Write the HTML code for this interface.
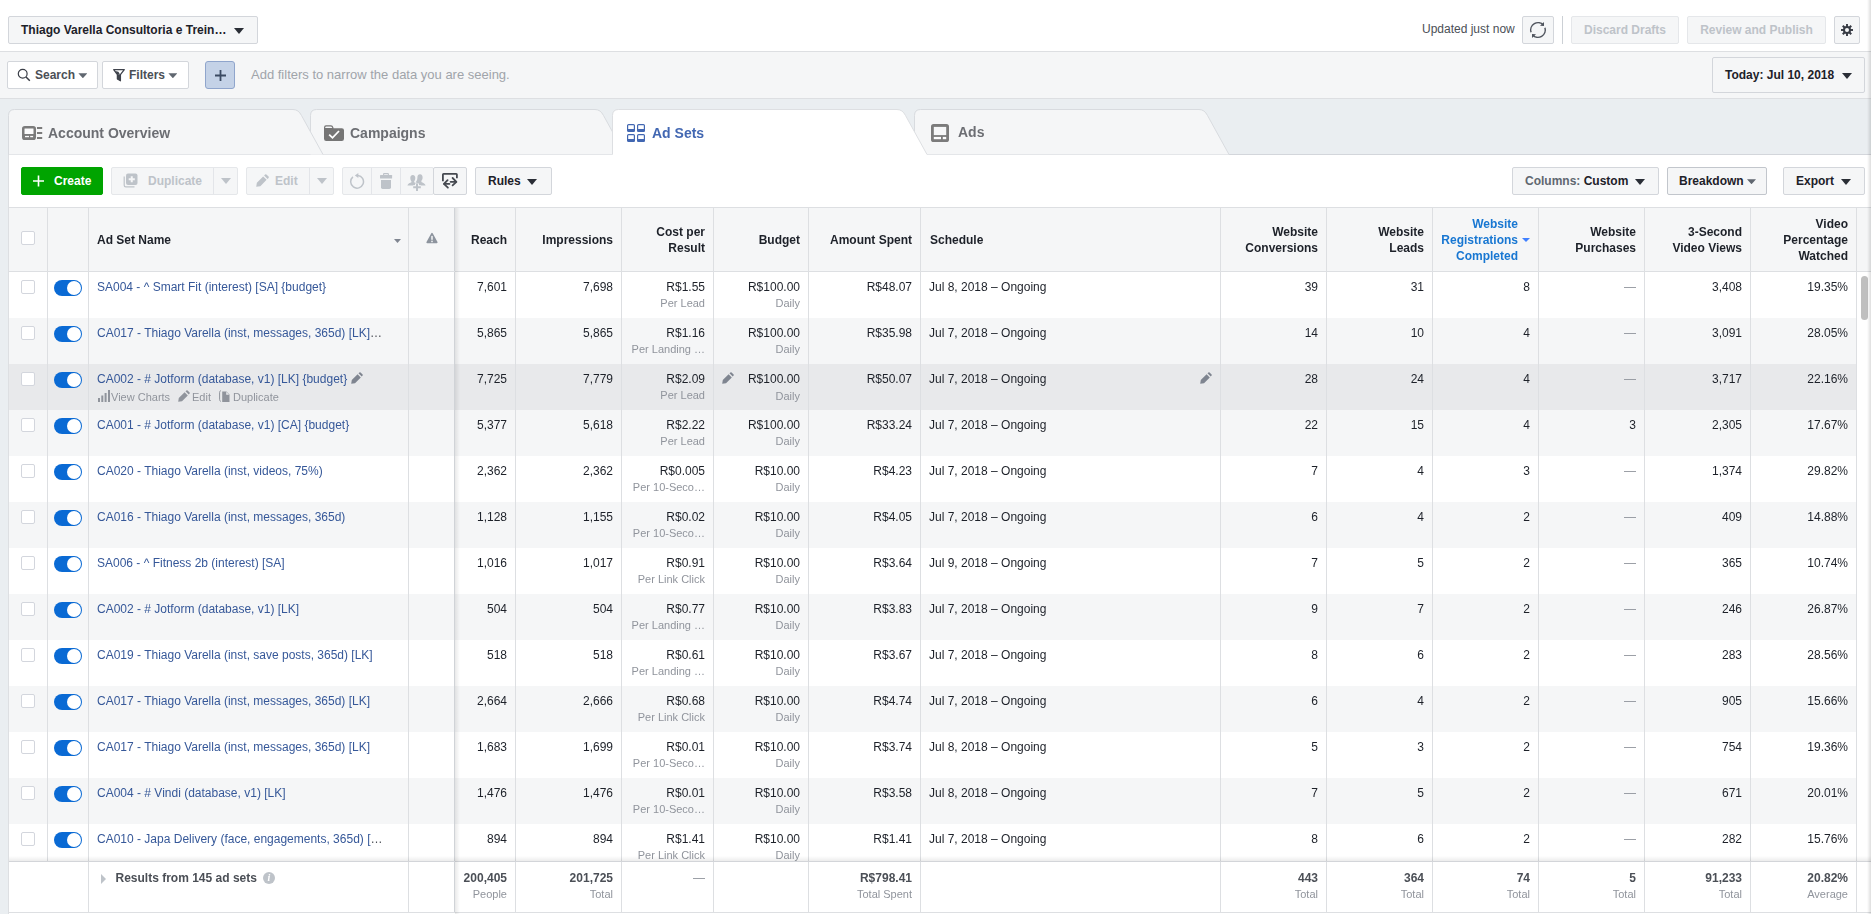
<!DOCTYPE html>
<html><head><meta charset="utf-8"><title>Ads Manager</title>
<style>
*{box-sizing:border-box}
html,body{margin:0;padding:0}
body{width:1871px;height:914px;overflow:hidden;background:#eaeef1;font-family:"Liberation Sans",sans-serif;font-size:12px;line-height:16px;color:#1d2129;position:relative}
.abs{position:absolute}
.tl{position:absolute;will-change:transform;font-size:14px;font-weight:bold;color:#6c6e73;line-height:18px;white-space:nowrap}
#top{position:absolute;left:0;top:0;width:1871px;height:52px;background:#fff;border-bottom:1px solid #dddfe2}
#filt{position:absolute;left:0;top:52px;width:1871px;height:47px;background:#f5f6f7;border-bottom:1px solid #dddfe2}
.btn{position:absolute;height:28px;border:1px solid #d3d6db;border-radius:2px;background:#f5f6f7;font-weight:bold;font-size:12px;line-height:26px;color:#4b4f56;white-space:nowrap}
.btn.w{background:#fff}
.btn.dis{color:#bec3c9;border-color:#e5e7ea;background:#f5f6f7}
.caret{display:inline-block;width:0;height:0;border-left:5px solid transparent;border-right:5px solid transparent;border-top:6px solid #2a2e36;vertical-align:middle}
.caret.g{border-top-color:#606770}
.caret.sm{border:0;width:9px;height:5px;background:#606770;clip-path:polygon(0 0,100% 0,50% 100%)}
.caret.blue{background:#4080ff;width:8px;height:4px}
.caret.hc{width:7px;height:4px;background:#7f8590}
/* panel */
#panel{position:absolute;left:8px;top:155px;width:1863px;height:759px;background:#fff;border-left:1px solid #dddfe2}
/* table */
#tbl{will-change:transform;position:absolute;left:9px;top:207px;width:1862px;height:707px;overflow:hidden;border-top:1px solid #dddfe2}
#head{position:absolute;left:0;top:0;width:1862px;height:64px;background:#f5f6f7;border-bottom:1px solid #dddfe2}
#head .c{height:63px;display:flex;align-items:center;justify-content:flex-end;font-weight:bold;color:#1d2129;text-align:right;padding:0 8px}
#head .c.l{justify-content:flex-start;text-align:left}
#head .c.bl{color:#1877d2}
#head .c.sch{padding-left:9px}
#body{position:absolute;left:0;top:64px;width:1862px;height:589px;overflow:hidden;background:#fff}
.row{position:absolute;left:0;width:1848px;height:46px;background:#fff}
.row.alt{background:#f5f6f7}
.row.hov{background:#e8e9eb}
.c{position:absolute;top:0;height:46px;border-right:1px solid #dddfe2;padding:7px 8px 0 8px;text-align:right;white-space:nowrap;overflow:hidden;color:#1d2129}
.c.l{text-align:left}
.c3{border-right:1px solid #d0d3d7}
.sub{font-size:11px;color:#90949c;line-height:16px}
.dash{color:#90949c}
.nm{color:#365899}
.el{color:#4b4f56}
.cb{position:absolute;left:12px;top:8px;width:14px;height:14px;border:1px solid #d3d6dd;border-radius:2px;background:#fff}
#head .cb{top:23px}
.tg{position:absolute;left:6px;top:8px;width:28px;height:16px;border-radius:8px;background:#0a6ad4}
.tg i{position:absolute;right:1px;top:1px;width:14px;height:14px;border-radius:7px;background:#fff}
.pen{fill:#7f8590}
.hc{position:absolute;right:7px;top:31px}
.warn{position:absolute;left:17px;top:24px;fill:#8d949e}
.npen{position:absolute;margin-left:4px;margin-top:1px}
.acts{position:absolute;left:8px;top:25px;height:16px;font-size:11px;color:#90949c;line-height:16px}
.acts svg{position:absolute;top:1px;fill:#90949c}
.acts span{position:absolute;top:0}
.ic-ch{left:1px}.a1{left:14px}
.apen{left:81px}.a2{left:95px}
.ic-du{left:122px}.ic-du .ln{stroke:#90949c}.a3{left:136px}
.bpen{position:absolute;left:8px;top:8px}
.spen{position:absolute;right:8px;top:8px}
.tri{display:inline-block;width:0;height:0;border-top:5px solid transparent;border-bottom:5px solid transparent;border-left:5px solid #bec3c9;margin:0 9.5px 0 4px;vertical-align:-2px}
.info{display:inline-block;width:12px;height:12px;border-radius:6px;background:#bec3c9;color:#fff;font-size:10px;font-weight:bold;font-style:italic;line-height:12px;text-align:center;margin-left:6px;vertical-align:1px;font-family:"Liberation Serif",serif}

#foot{position:absolute;left:0;top:653px;width:1862px;height:52px;background:#fff;border-top:1px solid #d3d5d9;border-bottom:1px solid #dddfe2}
#foot .c{height:50px;padding-top:8px}
#foot b{color:#4b4f56}
</style></head><body>
<div id="top">
  <div class="btn" style="left:8px;top:16px;width:250px;color:#1d2129;padding-left:12px">Thiago Varella Consultoria e Trein… <span class="caret" style="margin-left:4px"></span></div>
  <div class="abs" style="left:1422px;top:21px;color:#4b4f56">Updated just now</div>
  <div class="btn" style="left:1522px;top:16px;width:32px"><svg class="abs" style="left:6px;top:4px" width="18" height="18" viewBox="0 0 18 18"><g fill="none" stroke="#50555e" stroke-width="1.5"><path d="M2.06 11.26 A7.3 7.3 0 0 1 14.42 4.12"/><path d="M15.94 6.74 A7.3 7.3 0 0 1 3.58 13.88"/></g><path d="M15 1.1 V5 L11 4.7 Z" fill="#50555e"/><path d="M3 16.9 V13 L7 13.3 Z" fill="#50555e"/></svg></div>
  <div class="abs" style="left:1562px;top:16px;width:1px;height:28px;background:#ccd0d5"></div>
  <div class="btn dis" style="left:1571px;top:16px;width:108px;text-align:center">Discard Drafts</div>
  <div class="btn dis" style="left:1687px;top:16px;width:139px;text-align:center">Review and Publish</div>
  <div class="btn" style="left:1834px;top:16px;width:26px"><svg class="abs" style="left:6px;top:7px" width="12" height="12" viewBox="-6 -6 12 12"><g fill="#373b44"><rect x="-0.95" y="-6" width="1.9" height="12" transform="rotate(0)"/><rect x="-0.95" y="-6" width="1.9" height="12" transform="rotate(45)"/><rect x="-0.95" y="-6" width="1.9" height="12" transform="rotate(90)"/><rect x="-0.95" y="-6" width="1.9" height="12" transform="rotate(135)"/><circle r="4"/></g><circle r="2" fill="#f5f6f7"/></svg></div>
</div>
<div id="filt">
  <div class="btn w" style="left:7px;top:9px;width:91px;padding-left:27px"><svg class="abs" style="left:9px;top:6px" width="14" height="14" viewBox="0 0 14 14"><circle cx="5.7" cy="5.7" r="4.4" fill="none" stroke="#3a3e47" stroke-width="1.2"/><path d="M9 9 L12.8 12.8" stroke="#3a3e47" stroke-width="1.5"/></svg>Search <span class="caret sm"></span></div>
  <div class="btn w" style="left:102px;top:9px;width:87px;padding-left:26px"><svg class="abs" style="left:10px;top:7px" width="12" height="13" viewBox="0 0 12 13"><path d="M0.7 0.65 H11.3 L7.4 5.6 V11.8 L4.4 10 V5.6 Z" fill="none" stroke="#3f434c" stroke-width="1.3" stroke-linejoin="round"/><path d="M4.4 5.4 H7.4 V11.8 L4.4 10 Z" fill="#3f434c"/><path d="M2.2 1.9 L5.4 2.7 L7 5.6 L4.4 5.8 Z" fill="#3f434c"/></svg>Filters <span class="caret sm"></span></div>
  <div class="btn" style="left:205px;top:9px;width:30px;background:#c4d2e7;border-color:#8fa5cc;border-radius:3px"><svg class="abs" style="left:9px;top:8px" width="11" height="11" viewBox="0 0 11 11"><path d="M5.5 0 V11 M0 5.5 H11" stroke="#3b4a63" stroke-width="1.8"/></svg></div>
  <div class="abs" style="left:251px;top:15px;font-size:13px;color:#a0a4aa">Add filters to narrow the data you are seeing.</div>
  <div class="btn" style="left:1712px;top:5px;width:153px;height:36px;line-height:35px;padding-left:12px;color:#1d2129">Today: Jul 10, 2018 <span class="caret" style="margin-left:4px"></span></div>
</div>
<svg id="tabs" class="abs" style="left:0;top:99px" width="1871" height="56" viewBox="0 99 1871 56"><rect x="8" y="154" width="1863" height="1" fill="#d3d6db"/><path d="M914.5,154.5 V115.5 Q914.5,109.5 920.5,109.5 H1199 Q1204.5,109.5 1207.5,115.5 L1229,154.5" fill="#f5f6f7" stroke="#d8dbdf" stroke-width="1"/><path d="M310.5,154.5 V115.5 Q310.5,109.5 316.5,109.5 H595 Q600.5,109.5 603.5,115.5 L625,154.5" fill="#f5f6f7" stroke="#d8dbdf" stroke-width="1"/><path d="M8.5,154.5 V115.5 Q8.5,109.5 14.5,109.5 H293 Q298.5,109.5 301.5,115.5 L323,154.5" fill="#f5f6f7" stroke="#d8dbdf" stroke-width="1"/><path d="M612.5,154.5 V115.5 Q612.5,109.5 618.5,109.5 H897 Q902.5,109.5 905.5,115.5 L927,154.5 V156 H612.5 Z" fill="#fff" stroke="none"/><path d="M612.5,154.5 V115.5 Q612.5,109.5 618.5,109.5 H897 Q902.5,109.5 905.5,115.5 L927,154.5" fill="none" stroke="#dddfe2" stroke-width="1"/></svg>
<svg class="abs" style="left:22px;top:126px" width="21" height="14" viewBox="0 0 21 14"><rect x="1.25" y="1.25" width="11.5" height="11.5" rx="1.6" fill="#fcfcfd" stroke="#7b7b7b" stroke-width="2.5"/><rect x="1.5" y="8" width="11" height="4.8" fill="#7b7b7b"/><rect x="3" y="9.9" width="4" height="1.3" fill="#fcfcfd"/><rect x="8.2" y="9.9" width="2.9" height="1.3" fill="#fcfcfd"/><rect x="15" y="1" width="5.2" height="2" fill="#7b7b7b"/><rect x="15" y="6" width="5.2" height="2" fill="#7b7b7b"/><rect x="15" y="11" width="5.2" height="2" fill="#7b7b7b"/></svg>
<div class="tl" style="left:48px;top:124px">Account Overview</div>
<svg class="abs" style="left:324px;top:125px" width="20" height="16" viewBox="0 0 20 16"><path d="M0 2.5 Q0 0.3 2 0.3 H7 Q8.8 0.3 9.2 2 L9.6 3.2 H17.8 Q20 3.2 20 5.2 V13.8 Q20 16 17.8 16 H2.2 Q0 16 0 13.8 Z" fill="#757575"/><path d="M1.2 3 V2.6 Q1.2 1.4 2.4 1.4 H6.6 Q7.8 1.4 8.1 2.4 L8.3 3 Z" fill="#f5f6f7"/><path d="M5.2 9.6 L8.5 12.8 L15 6" fill="none" stroke="#fff" stroke-width="1.8"/></svg>
<div class="tl" style="left:350px;top:124px">Campaigns</div>
<svg class="abs" style="left:627px;top:124px" width="18" height="18" viewBox="0 0 18 18"><g fill="#fff" stroke="#4267b2" stroke-width="1.2"><rect x="0.6" y="0.6" width="6.8" height="6.8" rx="1"/><rect x="10.6" y="0.6" width="6.8" height="6.8" rx="1"/><rect x="0.6" y="10.6" width="6.8" height="6.8" rx="1"/><rect x="10.6" y="10.6" width="6.8" height="6.8" rx="1"/></g><g fill="#4267b2"><rect x="0.6" y="5" width="6.8" height="2.6"/><rect x="10.6" y="5" width="6.8" height="2.6"/><rect x="0.6" y="15" width="6.8" height="2.6"/><rect x="10.6" y="15" width="6.8" height="2.6"/></g></svg>
<div class="tl" style="left:652px;top:124px;color:#4267b2">Ad Sets</div>
<svg class="abs" style="left:931px;top:124px" width="18" height="18" viewBox="0 0 18 18"><rect x="0" y="0" width="18" height="18" rx="2.6" fill="#7b7b7b"/><rect x="2.8" y="2.9" width="12.4" height="8.2" fill="#f6f7f8"/><rect x="2.8" y="12.9" width="7.2" height="2.3" fill="#fcfcfd"/><rect x="11.8" y="12.9" width="3.4" height="2.3" fill="#fcfcfd"/></svg>
<div class="tl" style="left:958px;top:123px">Ads</div>

<div id="panel"></div>
<div id="tools">
  <div class="btn" style="left:21px;top:167px;width:82px;background:#00a400;border-color:#00a400;color:#fff;padding-left:32px"><svg class="abs" style="left:11px;top:7px" width="11" height="12" viewBox="0 0 11 12"><path d="M5.5 0.5 V11.5 M0 6 H11" stroke="#fff" stroke-width="1.6"/></svg>Create</div>
  <div class="btn dis" style="left:111px;top:167px;width:127px;padding-left:36px"><svg class="abs" style="left:11px;top:5px" width="15" height="15" viewBox="0 0 15 15"><path d="M1.2 3.5 V12.2 Q1.2 13.8 2.8 13.8 H11.5" fill="none" stroke="#bec3c9" stroke-width="1.2"/><rect x="3" y="0.5" width="11.5" height="11.5" rx="2" fill="#bec3c9"/><path d="M8.75 3.2 V9.3 M5.7 6.25 H11.8" stroke="#f5f6f7" stroke-width="2"/></svg>Duplicate<span class="abs" style="right:0;top:0;width:24px;height:26px;border-left:1px solid #e3e5e9"><span class="caret" style="position:absolute;left:7px;top:10px;border-top-color:#bec3c9"></span></span></div>
  <div class="btn dis" style="left:246px;top:167px;width:88px;padding-left:28px"><svg class="abs" style="left:9px;top:6px" width="13" height="13" viewBox="0 0 12 12"><path fill="#bec3c9" d="M0.2 11.8 L0.8 8 L6.6 2.2 L9.8 5.4 L4 11.2 Z M7.5 1.3 L8.4 0.4 Q9 -0.1 9.6 0.4 L11.6 2.4 Q12.1 3 11.6 3.6 L10.7 4.5 Z"/></svg>Edit<span class="abs" style="right:0;top:0;width:24px;height:26px;border-left:1px solid #e3e5e9"><span class="caret" style="position:absolute;left:7px;top:10px;border-top-color:#bec3c9"></span></span></div>
  <div class="btn dis" style="left:342px;top:167px;width:92px"><svg class="abs" style="left:5px;top:5px" width="17" height="17" viewBox="0 0 17 17"><path d="M9.9 2.4 A6.4 6.4 0 1 1 4.9 3.9" fill="none" stroke="#bec3c9" stroke-width="1.5"/><path d="M10.3 0 L6.9 2.4 L10.3 4.9 Z" fill="#bec3c9"/></svg><svg class="abs" style="left:36px;top:5px" width="14" height="17" viewBox="0 0 14 17"><path d="M4.6 2.2 V1.2 Q4.6 0.6 5.2 0.6 H8.8 Q9.4 0.6 9.4 1.2 V2.2" fill="none" stroke="#bec3c9" stroke-width="1.1"/><rect x="1" y="2" width="12.1" height="3.6" rx="0.5" fill="#bec3c9"/><path d="M2 7.1 H12 V14.3 Q12 15.9 10.4 15.9 H3.6 Q2 15.9 2 14.3 Z" fill="#bec3c9"/></svg><svg class="abs" style="left:64px;top:6px" width="19" height="18" viewBox="0 0 19 18"><g fill="#bec3c9"><path d="M5.8 1 C7.6 1 8.3 2.4 8.3 4 C8.3 5.6 7.7 6.6 7.2 7.2 V8.2 C8.2 8.8 10.6 9.4 11 11.6 H0.4 C0.8 9.4 3.4 8.8 4.4 8.2 V7.2 C3.9 6.6 3.3 5.6 3.3 4 C3.3 2.4 4 1 5.8 1Z"/><path d="M13 0.2 C14.9 0.2 15.6 1.7 15.6 3.4 C15.6 5.1 15 6.2 14.4 6.8 V7.9 C15.5 8.5 18.2 9.2 18.6 11.6 H11.6 C11.4 9.8 10 8.9 8.6 8.3 C9.4 7.4 10.4 6 10.4 3.4 C10.4 1.7 11.1 0.2 13 0.2Z"/><path d="M10 9.4 V17 M6.2 13.2 H13.8" stroke="#f5f6f7" stroke-width="4" fill="none"/><path d="M10 9.5 V16.9 M6.2 13.2 H13.8" stroke="#bec3c9" stroke-width="2" fill="none"/></g></svg><span class="abs" style="left:28px;top:0;width:1px;height:26px;background:#e3e5e9"></span><span class="abs" style="left:57px;top:0;width:1px;height:26px;background:#e3e5e9"></span></div>
  <div class="btn" style="left:433px;top:167px;width:34px"><svg class="abs" style="left:8px;top:5px" width="17" height="17" viewBox="0 0 17 17"><g fill="none" stroke="#454950" stroke-width="1.8" stroke-linecap="round" stroke-linejoin="round"><path d="M0.9 8.2 V1.6 Q0.9 0.95 1.6 0.95 H14.2 Q14.9 0.95 14.9 1.6 V5.2" stroke-linecap="butt"/><path d="M8.6 8.8 H14"/><path d="M10.6 5 L14.4 8.8 L10.6 12.4"/><path d="M2.4 10.9 H7.4"/><path d="M5.6 7.2 L1.9 10.9 L5.9 14.7"/></g></svg></div>
  <div class="btn" style="left:475px;top:167px;width:77px;color:#1d2129;padding-left:12px">Rules <span class="caret" style="margin-left:3px"></span></div>
  <div class="btn" style="left:1512px;top:167px;width:147px;padding-left:12px;color:#606770">Columns: <span style="color:#1d2129">Custom</span> <span class="caret" style="margin-left:3px"></span></div>
  <div class="btn" style="left:1667px;top:167px;width:100px;color:#1d2129;padding-left:11px;border-color:#c2c6cc">Breakdown <span class="caret sm"></span></div>
  <div class="btn" style="left:1783px;top:167px;width:82px;color:#1d2129;padding-left:12px">Export <span class="caret" style="margin-left:4px"></span></div>
</div>
<div id="tbl">
  <div id="head"><div class="c c0 " style="left:0px;width:39px"><span class="cb"></span></div><div class="c c1 " style="left:39px;width:41px"></div><div class="c c2 l" style="left:80px;width:320px"><span class="ht">Ad Set Name</span><span class="caret sm hc"></span></div><div class="c c3 " style="left:400px;width:46px"><svg class="warn" viewBox="0 0 12 12" width="12" height="12"><path d="M6 1.6 L10.8 10.4 H1.2 Z" stroke="#8d949e" stroke-width="1.6" stroke-linejoin="round"/><rect x="5.25" y="3.9" width="1.5" height="3.9" fill="#f5f6f7"/><rect x="5.25" y="8.7" width="1.5" height="1.5" fill="#f5f6f7"/></svg></div><div class="c c4 " style="left:446px;width:61px"><span class="ht">Reach</span></div><div class="c c5 " style="left:507px;width:106px"><span class="ht">Impressions</span></div><div class="c c6 " style="left:613px;width:92px"><span class="ht">Cost per<br>Result</span></div><div class="c c7 " style="left:705px;width:95px"><span class="ht">Budget</span></div><div class="c c8 " style="left:800px;width:112px"><span class="ht">Amount Spent</span></div><div class="c c9 l sch" style="left:912px;width:300px"><span class="ht">Schedule</span></div><div class="c c10 " style="left:1212px;width:106px"><span class="ht">Website<br>Conversions</span></div><div class="c c11 " style="left:1318px;width:106px"><span class="ht">Website<br>Leads</span></div><div class="c c12 bl" style="left:1424px;width:106px"><span class="ht" style="padding-right:12px">Website<br>Registrations<br>Completed</span><span class="caret sm blue" style="position:absolute;right:8px;top:30px"></span></div><div class="c c13 " style="left:1530px;width:106px"><span class="ht">Website<br>Purchases</span></div><div class="c c14 " style="left:1636px;width:106px"><span class="ht">3-Second<br>Video Views</span></div><div class="c c15 " style="left:1742px;width:106px"><span class="ht">Video<br>Percentage<br>Watched</span></div></div>
  <div id="body">
<div class="row" style="top:0px"><div class="c c0 " style="left:0px;width:39px"><span class="cb"></span></div><div class="c c1 " style="left:39px;width:41px"><span class="tg"><i></i></span></div><div class="c c2 l" style="left:80px;width:320px"><span class="nm">SA004 - ^ Smart Fit (interest) [SA] {budget}</span></div><div class="c c3 " style="left:400px;width:46px"></div><div class="c c4 " style="left:446px;width:61px">7,601</div><div class="c c5 " style="left:507px;width:106px">7,698</div><div class="c c6 " style="left:613px;width:92px">R$1.55<div class="sub">Per Lead</div></div><div class="c c7 " style="left:705px;width:95px">R$100.00<div class="sub">Daily</div></div><div class="c c8 " style="left:800px;width:112px">R$48.07</div><div class="c c9 l" style="left:912px;width:300px">Jul 8, 2018 – Ongoing</div><div class="c c10 " style="left:1212px;width:106px">39</div><div class="c c11 " style="left:1318px;width:106px">31</div><div class="c c12 " style="left:1424px;width:106px">8</div><div class="c c13 dash" style="left:1530px;width:106px">—</div><div class="c c14 " style="left:1636px;width:106px">3,408</div><div class="c c15 " style="left:1742px;width:106px">19.35%</div></div>
<div class="row alt" style="top:46px"><div class="c c0 " style="left:0px;width:39px"><span class="cb"></span></div><div class="c c1 " style="left:39px;width:41px"><span class="tg"><i></i></span></div><div class="c c2 l" style="left:80px;width:320px"><span class="nm">CA017 - Thiago Varella (inst, messages, 365d) [LK]<span class="el">…</span></span></div><div class="c c3 " style="left:400px;width:46px"></div><div class="c c4 " style="left:446px;width:61px">5,865</div><div class="c c5 " style="left:507px;width:106px">5,865</div><div class="c c6 " style="left:613px;width:92px">R$1.16<div class="sub">Per Landing …</div></div><div class="c c7 " style="left:705px;width:95px">R$100.00<div class="sub">Daily</div></div><div class="c c8 " style="left:800px;width:112px">R$35.98</div><div class="c c9 l" style="left:912px;width:300px">Jul 7, 2018 – Ongoing</div><div class="c c10 " style="left:1212px;width:106px">14</div><div class="c c11 " style="left:1318px;width:106px">10</div><div class="c c12 " style="left:1424px;width:106px">4</div><div class="c c13 dash" style="left:1530px;width:106px">—</div><div class="c c14 " style="left:1636px;width:106px">3,091</div><div class="c c15 " style="left:1742px;width:106px">28.05%</div></div>
<div class="row hov" style="top:92px"><div class="c c0 " style="left:0px;width:39px"><span class="cb"></span></div><div class="c c1 " style="left:39px;width:41px"><span class="tg"><i></i></span></div><div class="c c2 l" style="left:80px;width:320px"><span class="nm">CA002 - # Jotform (database, v1) [LK] {budget}</span><svg class="pen npen" viewBox="0 0 12 12" width="12" height="12"><path d="M0.2 11.8 L0.8 8 L6.6 2.2 L9.8 5.4 L4 11.2 Z M7.5 1.3 L8.4 0.4 Q9 -0.1 9.6 0.4 L11.6 2.4 Q12.1 3 11.6 3.6 L10.7 4.5 Z"/></svg><div class="acts"><svg class="ic-ch" viewBox="0 0 12 12" width="12" height="12"><path d="M0 8h2v4H0zM3.3 5.5h2V12h-2zM6.6 3h2v9h-2zM10 0h2v12h-2z"/></svg><span class="a1">View Charts</span><svg class="pen apen" viewBox="0 0 12 12" width="12" height="12"><path d="M0.2 11.8 L0.8 8 L6.6 2.2 L9.8 5.4 L4 11.2 Z M7.5 1.3 L8.4 0.4 Q9 -0.1 9.6 0.4 L11.6 2.4 Q12.1 3 11.6 3.6 L10.7 4.5 Z"/></svg><span class="a2">Edit</span><svg class="ic-du" viewBox="0 0 12 12" width="12" height="12"><path d="M3.2 1.5h4.3l3 3V12H3.2z M7.2 1.8v3h3" /><path class="ln" d="M1.8 0.5 C0.6 1.2 0.6 2 0.6 3 v6 c0 1 0 1.8 1.2 2.5" fill="none" stroke-width="1"/></svg><span class="a3">Duplicate</span></div></div><div class="c c3 " style="left:400px;width:46px"></div><div class="c c4 " style="left:446px;width:61px">7,725</div><div class="c c5 " style="left:507px;width:106px">7,779</div><div class="c c6 " style="left:613px;width:92px">R$2.09<div class="sub">Per Lead</div></div><div class="c c7 " style="left:705px;width:95px"><svg class="pen bpen" viewBox="0 0 12 12" width="12" height="12"><path d="M0.2 11.8 L0.8 8 L6.6 2.2 L9.8 5.4 L4 11.2 Z M7.5 1.3 L8.4 0.4 Q9 -0.1 9.6 0.4 L11.6 2.4 Q12.1 3 11.6 3.6 L10.7 4.5 Z"/></svg>R$100.00<div class="sub" style="margin-top:1px">Daily</div></div><div class="c c8 " style="left:800px;width:112px">R$50.07</div><div class="c c9 l" style="left:912px;width:300px">Jul 7, 2018 – Ongoing<svg class="pen spen" viewBox="0 0 12 12" width="12" height="12"><path d="M0.2 11.8 L0.8 8 L6.6 2.2 L9.8 5.4 L4 11.2 Z M7.5 1.3 L8.4 0.4 Q9 -0.1 9.6 0.4 L11.6 2.4 Q12.1 3 11.6 3.6 L10.7 4.5 Z"/></svg></div><div class="c c10 " style="left:1212px;width:106px">28</div><div class="c c11 " style="left:1318px;width:106px">24</div><div class="c c12 " style="left:1424px;width:106px">4</div><div class="c c13 dash" style="left:1530px;width:106px">—</div><div class="c c14 " style="left:1636px;width:106px">3,717</div><div class="c c15 " style="left:1742px;width:106px">22.16%</div></div>
<div class="row alt" style="top:138px"><div class="c c0 " style="left:0px;width:39px"><span class="cb"></span></div><div class="c c1 " style="left:39px;width:41px"><span class="tg"><i></i></span></div><div class="c c2 l" style="left:80px;width:320px"><span class="nm">CA001 - # Jotform (database, v1) [CA] {budget}</span></div><div class="c c3 " style="left:400px;width:46px"></div><div class="c c4 " style="left:446px;width:61px">5,377</div><div class="c c5 " style="left:507px;width:106px">5,618</div><div class="c c6 " style="left:613px;width:92px">R$2.22<div class="sub">Per Lead</div></div><div class="c c7 " style="left:705px;width:95px">R$100.00<div class="sub">Daily</div></div><div class="c c8 " style="left:800px;width:112px">R$33.24</div><div class="c c9 l" style="left:912px;width:300px">Jul 7, 2018 – Ongoing</div><div class="c c10 " style="left:1212px;width:106px">22</div><div class="c c11 " style="left:1318px;width:106px">15</div><div class="c c12 " style="left:1424px;width:106px">4</div><div class="c c13 " style="left:1530px;width:106px">3</div><div class="c c14 " style="left:1636px;width:106px">2,305</div><div class="c c15 " style="left:1742px;width:106px">17.67%</div></div>
<div class="row" style="top:184px"><div class="c c0 " style="left:0px;width:39px"><span class="cb"></span></div><div class="c c1 " style="left:39px;width:41px"><span class="tg"><i></i></span></div><div class="c c2 l" style="left:80px;width:320px"><span class="nm">CA020 - Thiago Varella (inst, videos, 75%)</span></div><div class="c c3 " style="left:400px;width:46px"></div><div class="c c4 " style="left:446px;width:61px">2,362</div><div class="c c5 " style="left:507px;width:106px">2,362</div><div class="c c6 " style="left:613px;width:92px">R$0.005<div class="sub">Per 10-Seco…</div></div><div class="c c7 " style="left:705px;width:95px">R$10.00<div class="sub">Daily</div></div><div class="c c8 " style="left:800px;width:112px">R$4.23</div><div class="c c9 l" style="left:912px;width:300px">Jul 7, 2018 – Ongoing</div><div class="c c10 " style="left:1212px;width:106px">7</div><div class="c c11 " style="left:1318px;width:106px">4</div><div class="c c12 " style="left:1424px;width:106px">3</div><div class="c c13 dash" style="left:1530px;width:106px">—</div><div class="c c14 " style="left:1636px;width:106px">1,374</div><div class="c c15 " style="left:1742px;width:106px">29.82%</div></div>
<div class="row alt" style="top:230px"><div class="c c0 " style="left:0px;width:39px"><span class="cb"></span></div><div class="c c1 " style="left:39px;width:41px"><span class="tg"><i></i></span></div><div class="c c2 l" style="left:80px;width:320px"><span class="nm">CA016 - Thiago Varella (inst, messages, 365d)</span></div><div class="c c3 " style="left:400px;width:46px"></div><div class="c c4 " style="left:446px;width:61px">1,128</div><div class="c c5 " style="left:507px;width:106px">1,155</div><div class="c c6 " style="left:613px;width:92px">R$0.02<div class="sub">Per 10-Seco…</div></div><div class="c c7 " style="left:705px;width:95px">R$10.00<div class="sub">Daily</div></div><div class="c c8 " style="left:800px;width:112px">R$4.05</div><div class="c c9 l" style="left:912px;width:300px">Jul 7, 2018 – Ongoing</div><div class="c c10 " style="left:1212px;width:106px">6</div><div class="c c11 " style="left:1318px;width:106px">4</div><div class="c c12 " style="left:1424px;width:106px">2</div><div class="c c13 dash" style="left:1530px;width:106px">—</div><div class="c c14 " style="left:1636px;width:106px">409</div><div class="c c15 " style="left:1742px;width:106px">14.88%</div></div>
<div class="row" style="top:276px"><div class="c c0 " style="left:0px;width:39px"><span class="cb"></span></div><div class="c c1 " style="left:39px;width:41px"><span class="tg"><i></i></span></div><div class="c c2 l" style="left:80px;width:320px"><span class="nm">SA006 - ^ Fitness 2b (interest) [SA]</span></div><div class="c c3 " style="left:400px;width:46px"></div><div class="c c4 " style="left:446px;width:61px">1,016</div><div class="c c5 " style="left:507px;width:106px">1,017</div><div class="c c6 " style="left:613px;width:92px">R$0.91<div class="sub">Per Link Click</div></div><div class="c c7 " style="left:705px;width:95px">R$10.00<div class="sub">Daily</div></div><div class="c c8 " style="left:800px;width:112px">R$3.64</div><div class="c c9 l" style="left:912px;width:300px">Jul 9, 2018 – Ongoing</div><div class="c c10 " style="left:1212px;width:106px">7</div><div class="c c11 " style="left:1318px;width:106px">5</div><div class="c c12 " style="left:1424px;width:106px">2</div><div class="c c13 dash" style="left:1530px;width:106px">—</div><div class="c c14 " style="left:1636px;width:106px">365</div><div class="c c15 " style="left:1742px;width:106px">10.74%</div></div>
<div class="row alt" style="top:322px"><div class="c c0 " style="left:0px;width:39px"><span class="cb"></span></div><div class="c c1 " style="left:39px;width:41px"><span class="tg"><i></i></span></div><div class="c c2 l" style="left:80px;width:320px"><span class="nm">CA002 - # Jotform (database, v1) [LK]</span></div><div class="c c3 " style="left:400px;width:46px"></div><div class="c c4 " style="left:446px;width:61px">504</div><div class="c c5 " style="left:507px;width:106px">504</div><div class="c c6 " style="left:613px;width:92px">R$0.77<div class="sub">Per Landing …</div></div><div class="c c7 " style="left:705px;width:95px">R$10.00<div class="sub">Daily</div></div><div class="c c8 " style="left:800px;width:112px">R$3.83</div><div class="c c9 l" style="left:912px;width:300px">Jul 7, 2018 – Ongoing</div><div class="c c10 " style="left:1212px;width:106px">9</div><div class="c c11 " style="left:1318px;width:106px">7</div><div class="c c12 " style="left:1424px;width:106px">2</div><div class="c c13 dash" style="left:1530px;width:106px">—</div><div class="c c14 " style="left:1636px;width:106px">246</div><div class="c c15 " style="left:1742px;width:106px">26.87%</div></div>
<div class="row" style="top:368px"><div class="c c0 " style="left:0px;width:39px"><span class="cb"></span></div><div class="c c1 " style="left:39px;width:41px"><span class="tg"><i></i></span></div><div class="c c2 l" style="left:80px;width:320px"><span class="nm">CA019 - Thiago Varella (inst, save posts, 365d) [LK]</span></div><div class="c c3 " style="left:400px;width:46px"></div><div class="c c4 " style="left:446px;width:61px">518</div><div class="c c5 " style="left:507px;width:106px">518</div><div class="c c6 " style="left:613px;width:92px">R$0.61<div class="sub">Per Landing …</div></div><div class="c c7 " style="left:705px;width:95px">R$10.00<div class="sub">Daily</div></div><div class="c c8 " style="left:800px;width:112px">R$3.67</div><div class="c c9 l" style="left:912px;width:300px">Jul 7, 2018 – Ongoing</div><div class="c c10 " style="left:1212px;width:106px">8</div><div class="c c11 " style="left:1318px;width:106px">6</div><div class="c c12 " style="left:1424px;width:106px">2</div><div class="c c13 dash" style="left:1530px;width:106px">—</div><div class="c c14 " style="left:1636px;width:106px">283</div><div class="c c15 " style="left:1742px;width:106px">28.56%</div></div>
<div class="row alt" style="top:414px"><div class="c c0 " style="left:0px;width:39px"><span class="cb"></span></div><div class="c c1 " style="left:39px;width:41px"><span class="tg"><i></i></span></div><div class="c c2 l" style="left:80px;width:320px"><span class="nm">CA017 - Thiago Varella (inst, messages, 365d) [LK]</span></div><div class="c c3 " style="left:400px;width:46px"></div><div class="c c4 " style="left:446px;width:61px">2,664</div><div class="c c5 " style="left:507px;width:106px">2,666</div><div class="c c6 " style="left:613px;width:92px">R$0.68<div class="sub">Per Link Click</div></div><div class="c c7 " style="left:705px;width:95px">R$10.00<div class="sub">Daily</div></div><div class="c c8 " style="left:800px;width:112px">R$4.74</div><div class="c c9 l" style="left:912px;width:300px">Jul 7, 2018 – Ongoing</div><div class="c c10 " style="left:1212px;width:106px">6</div><div class="c c11 " style="left:1318px;width:106px">4</div><div class="c c12 " style="left:1424px;width:106px">2</div><div class="c c13 dash" style="left:1530px;width:106px">—</div><div class="c c14 " style="left:1636px;width:106px">905</div><div class="c c15 " style="left:1742px;width:106px">15.66%</div></div>
<div class="row" style="top:460px"><div class="c c0 " style="left:0px;width:39px"><span class="cb"></span></div><div class="c c1 " style="left:39px;width:41px"><span class="tg"><i></i></span></div><div class="c c2 l" style="left:80px;width:320px"><span class="nm">CA017 - Thiago Varella (inst, messages, 365d) [LK]</span></div><div class="c c3 " style="left:400px;width:46px"></div><div class="c c4 " style="left:446px;width:61px">1,683</div><div class="c c5 " style="left:507px;width:106px">1,699</div><div class="c c6 " style="left:613px;width:92px">R$0.01<div class="sub">Per 10-Seco…</div></div><div class="c c7 " style="left:705px;width:95px">R$10.00<div class="sub">Daily</div></div><div class="c c8 " style="left:800px;width:112px">R$3.74</div><div class="c c9 l" style="left:912px;width:300px">Jul 8, 2018 – Ongoing</div><div class="c c10 " style="left:1212px;width:106px">5</div><div class="c c11 " style="left:1318px;width:106px">3</div><div class="c c12 " style="left:1424px;width:106px">2</div><div class="c c13 dash" style="left:1530px;width:106px">—</div><div class="c c14 " style="left:1636px;width:106px">754</div><div class="c c15 " style="left:1742px;width:106px">19.36%</div></div>
<div class="row alt" style="top:506px"><div class="c c0 " style="left:0px;width:39px"><span class="cb"></span></div><div class="c c1 " style="left:39px;width:41px"><span class="tg"><i></i></span></div><div class="c c2 l" style="left:80px;width:320px"><span class="nm">CA004 - # Vindi (database, v1) [LK]</span></div><div class="c c3 " style="left:400px;width:46px"></div><div class="c c4 " style="left:446px;width:61px">1,476</div><div class="c c5 " style="left:507px;width:106px">1,476</div><div class="c c6 " style="left:613px;width:92px">R$0.01<div class="sub">Per 10-Seco…</div></div><div class="c c7 " style="left:705px;width:95px">R$10.00<div class="sub">Daily</div></div><div class="c c8 " style="left:800px;width:112px">R$3.58</div><div class="c c9 l" style="left:912px;width:300px">Jul 8, 2018 – Ongoing</div><div class="c c10 " style="left:1212px;width:106px">7</div><div class="c c11 " style="left:1318px;width:106px">5</div><div class="c c12 " style="left:1424px;width:106px">2</div><div class="c c13 dash" style="left:1530px;width:106px">—</div><div class="c c14 " style="left:1636px;width:106px">671</div><div class="c c15 " style="left:1742px;width:106px">20.01%</div></div>
<div class="row" style="top:552px"><div class="c c0 " style="left:0px;width:39px"><span class="cb"></span></div><div class="c c1 " style="left:39px;width:41px"><span class="tg"><i></i></span></div><div class="c c2 l" style="left:80px;width:320px"><span class="nm">CA010 - Japa Delivery (face, engagements, 365d) [<span class="el">…</span></span></div><div class="c c3 " style="left:400px;width:46px"></div><div class="c c4 " style="left:446px;width:61px">894</div><div class="c c5 " style="left:507px;width:106px">894</div><div class="c c6 " style="left:613px;width:92px">R$1.41<div class="sub">Per Link Click</div></div><div class="c c7 " style="left:705px;width:95px">R$10.00<div class="sub">Daily</div></div><div class="c c8 " style="left:800px;width:112px">R$1.41</div><div class="c c9 l" style="left:912px;width:300px">Jul 7, 2018 – Ongoing</div><div class="c c10 " style="left:1212px;width:106px">8</div><div class="c c11 " style="left:1318px;width:106px">6</div><div class="c c12 " style="left:1424px;width:106px">2</div><div class="c c13 dash" style="left:1530px;width:106px">—</div><div class="c c14 " style="left:1636px;width:106px">282</div><div class="c c15 " style="left:1742px;width:106px">15.76%</div></div>
  </div>
  <div class="abs" style="left:1852px;top:68px;width:7px;height:44px;border-radius:4px;background:#bfbfbf"></div>
  <div class="abs" style="left:0;top:648px;width:1862px;height:5px;background:linear-gradient(to bottom,rgba(0,0,0,0),rgba(0,0,0,.075))"></div>
  <div id="foot"><div class="c" style="left:0;width:80px"></div><div class="c c2 l" style="left:80px;width:320px"><span class="tri"></span><b>Results from 145 ad sets</b><span class="info">i</span></div><div class="c c3 " style="left:400px;width:46px"></div><div class="c c4 " style="left:446px;width:61px"><b>200,405</b><div class="sub">People</div></div><div class="c c5 " style="left:507px;width:106px"><b>201,725</b><div class="sub">Total</div></div><div class="c c6 dash" style="left:613px;width:92px">—</div><div class="c c7 " style="left:705px;width:95px"></div><div class="c c8 " style="left:800px;width:112px"><b>R$798.41</b><div class="sub">Total Spent</div></div><div class="c c9 " style="left:912px;width:300px"></div><div class="c c10 " style="left:1212px;width:106px"><b>443</b><div class="sub">Total</div></div><div class="c c11 " style="left:1318px;width:106px"><b>364</b><div class="sub">Total</div></div><div class="c c12 " style="left:1424px;width:106px"><b>74</b><div class="sub">Total</div></div><div class="c c13 " style="left:1530px;width:106px"><b>5</b><div class="sub">Total</div></div><div class="c c14 " style="left:1636px;width:106px"><b>91,233</b><div class="sub">Total</div></div><div class="c c15 " style="left:1742px;width:106px"><b>20.82%</b><div class="sub">Average</div></div></div>
  <div class="abs" style="left:446px;top:0;width:5px;height:706px;background:linear-gradient(to right,rgba(0,0,0,.085),rgba(0,0,0,0))"></div>
</div>
<div class="abs" style="left:1867px;top:0;width:4px;height:914px;z-index:50;background:linear-gradient(to right,rgba(0,0,0,0),rgba(0,0,0,.13))"></div>
</body></html>
